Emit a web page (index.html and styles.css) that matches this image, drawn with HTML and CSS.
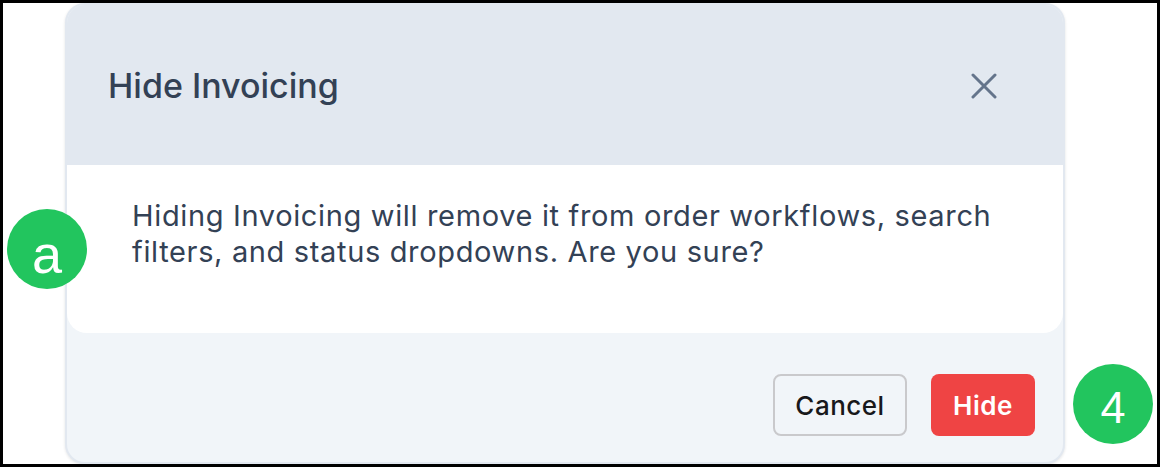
FILE: index.html
```html
<!DOCTYPE html>
<html lang="en">
<head>
<meta charset="utf-8">
<link rel="stylesheet" href="styles.css">
</head>
<body>
<div class="frame">
  <div class="modal">
    <div class="modal-header">
      <h2 class="modal-title">Hide Invoicing</h2>
      <button class="close-btn" aria-label="Close">
        <svg width="26" height="26" viewBox="0 0 26 26" fill="none" stroke="#64748b" stroke-width="3" stroke-linecap="round"><path d="M2 2 L24 24 M24 2 L2 24"/></svg>
      </button>
    </div>
    <div class="modal-body">
      <p>Hiding Invoicing will remove it from order workflows, search filters, and status dropdowns. Are you sure?</p>
    </div>
    <div class="modal-footer">
      <button class="btn btn-cancel">Cancel</button>
      <button class="btn btn-hide">Hide</button>
    </div>
  </div>
  <div class="badge badge-a">a</div>
  <div class="badge badge-4">4</div>
</div>
</body>
</html>
```
FILE: styles.css
```css
* { box-sizing: border-box; }
html, body { margin: 0; padding: 0; background: #fff; }
body { font-family: Inter, "Noto Sans", sans-serif; }
.frame {
  position: relative;
  width: 1160px;
  height: 467px;
  border: 3px solid #000;
  overflow: hidden;
  padding: 0 0 0 62px;
}
.modal {
  width: 1000px;
  height: 461px;
  border: 2px solid #e2e8f0;
  border-radius: 20px;
  background: #f1f5f9;
  display: flex;
  flex-direction: column;
  overflow: hidden;
  box-shadow: 0 1px 3px rgba(15, 23, 42, 0.12);
}
.modal-header {
  height: 160px;
  flex: none;
  background: #e2e8f0;
  display: flex;
  align-items: center;
  justify-content: space-between;
  padding: 0 64px 0 41px;
}
.modal-title {
  margin: 0;
  font-size: 34px;
  font-weight: 500;
  color: #334155;
  letter-spacing: 0;
}
.close-btn {
  border: 0;
  background: transparent;
  padding: 0;
  width: 30px;
  height: 30px;
  display: flex;
  align-items: center;
  justify-content: center;
  margin-top: 2px;
}
.modal-body {
  height: 168px;
  flex: none;
  background: #fff;
  border-radius: 0 0 20px 20px;
  padding: 33px 40px 0 65px;
}
.modal-body p {
  margin: 0;
  font-size: 29px;
  line-height: 36px;
  letter-spacing: 0.65px;
  color: #334155;
}
.modal-footer {
  flex: 1;
  display: flex;
  justify-content: flex-end;
  align-items: flex-start;
  gap: 24px;
  padding: 41px 28px 0 0;
}
.btn {
  height: 62px;
  border-radius: 8px;
  font-family: Inter, "Noto Sans", sans-serif;
  font-size: 26px;
  letter-spacing: 0.5px;
  display: flex;
  align-items: center;
  justify-content: center;
}
.btn-cancel {
  width: 134px;
  background: #f1f5f9;
  border: 2px solid #c9c9cc;
  color: #18181b;
  font-weight: 500;
}
.btn-hide {
  width: 104px;
  background: #ef4444;
  border: 0;
  color: #fff;
  font-weight: 600;
}
.badge {
  position: absolute;
  width: 80px;
  height: 80px;
  border-radius: 50%;
  background: #22c55e;
  color: #fff;
  font-family: "Liberation Sans", Arial, sans-serif;
  font-weight: 400;
  display: flex;
  align-items: center;
  justify-content: center;
  line-height: 1;
}
.badge-a { left: 4px; top: 206px; font-size: 54px; padding-top: 9px; }
.badge-4 { left: 1070px; top: 361px; font-size: 45px; padding-top: 6px; }
```
